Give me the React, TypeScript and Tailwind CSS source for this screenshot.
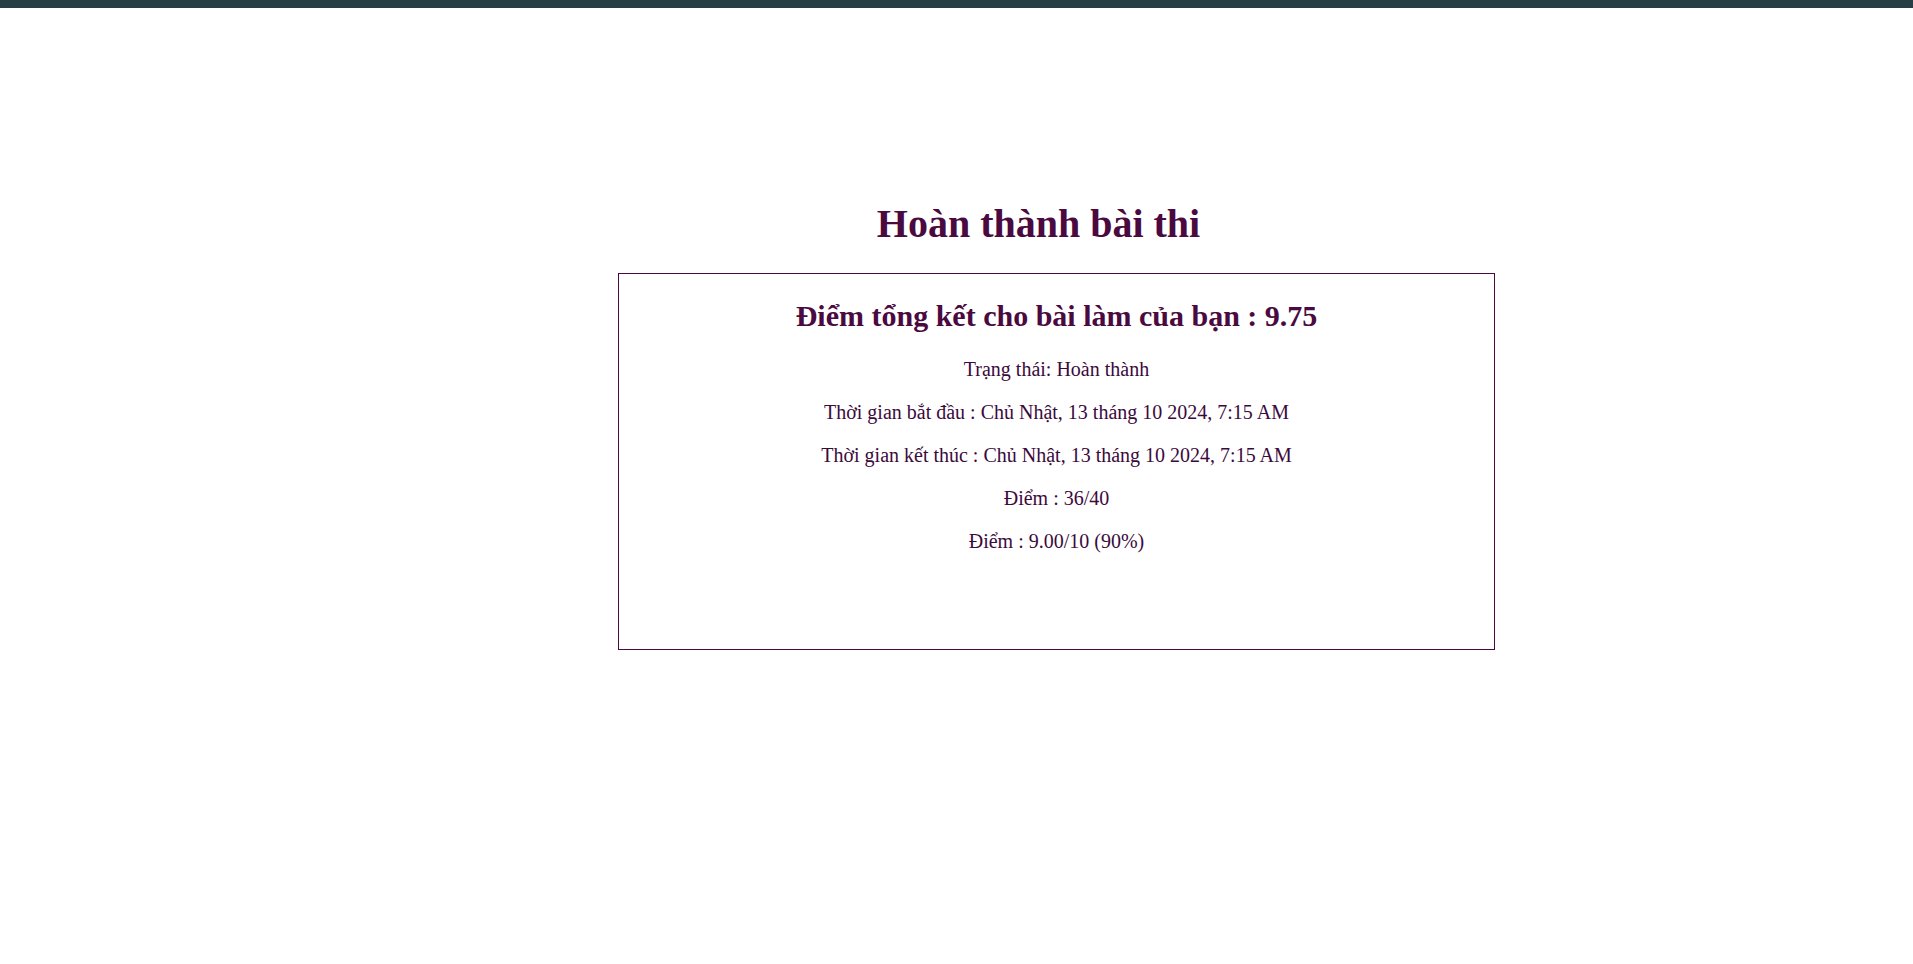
import React from "react";

const rows = [
  "Trạng thái: Hoàn thành",
  "Thời gian bắt đầu : Chủ Nhật, 13 tháng 10 2024, 7:15 AM",
  "Thời gian kết thúc : Chủ Nhật, 13 tháng 10 2024, 7:15 AM",
  "Điểm : 36/40",
  "Điểm : 9.00/10 (90%)",
];

export default function App() {
  return (
    <div className="min-h-screen bg-white font-['Liberation_Serif','Times_New_Roman',serif] text-[#4a0a3f]">
      <div className="h-2 bg-[#263f44]" />

      <div className="ml-[618px] w-[877px] pt-[194px]">
        {/* Title */}
        <h1 className="pr-[36px] text-center text-[40px] font-bold leading-[44px] text-[#4a0a3f]">
          Hoàn thành bài thi
        </h1>

        {/* Result box */}
        <div className="mt-[27px] h-[377px] border border-[#4a0a3f] pt-[25px]">
          <h2 className="text-center text-[30px] font-bold leading-[33px] text-[#4a0a3f]">
            Điểm tổng kết cho bài làm của bạn : 9.75
          </h2>
          <div className="pt-[6px]">
            {rows.map((row) => (
              <p
                key={row}
                className="my-5 text-center text-[20px] leading-[23px] text-[#3b0a3c]"
              >
                {row}
              </p>
            ))}
          </div>
        </div>
      </div>
    </div>
  );
}
